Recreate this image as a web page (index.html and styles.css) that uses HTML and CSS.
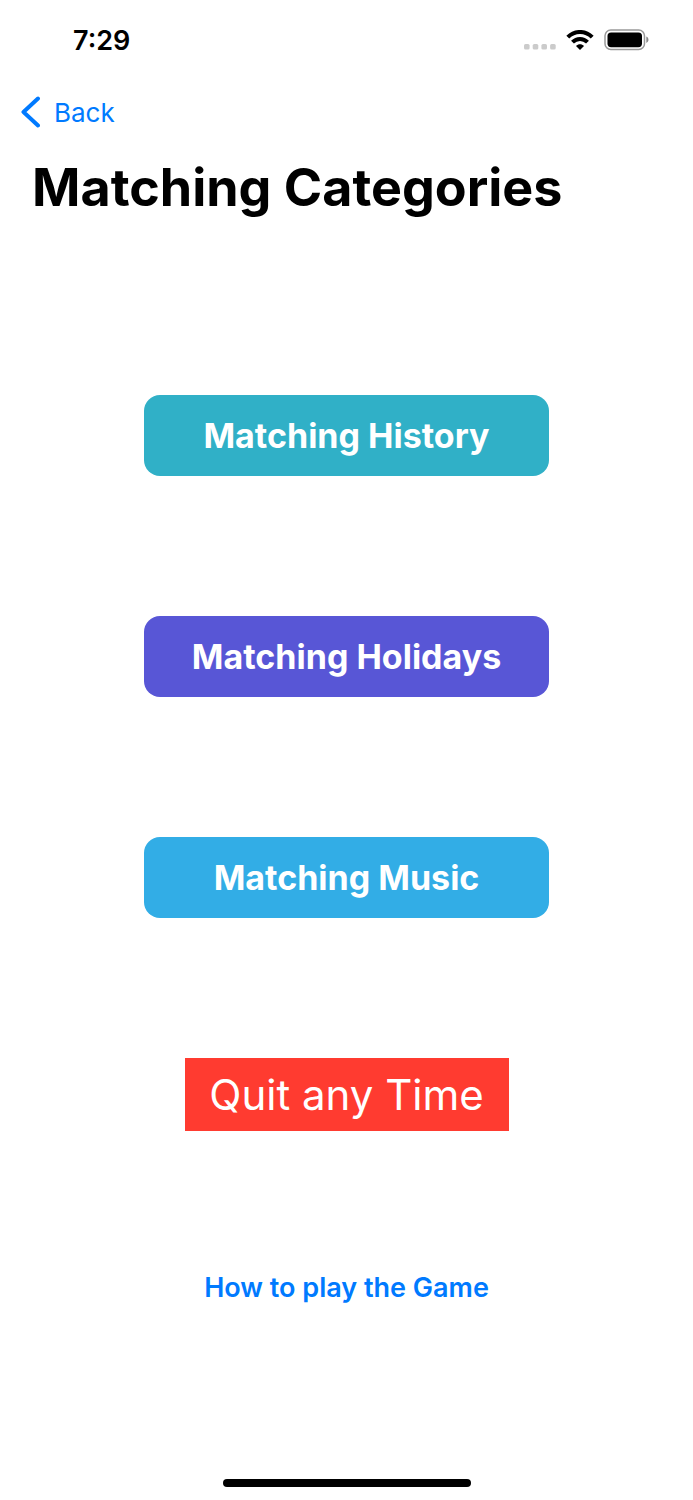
FILE: index.html
```
<!DOCTYPE html>
<html lang="en">
  <head>
    <meta charset="utf-8" />
    <meta name="viewport" content="width=device-width, initial-scale=1.0" />
    <title>Matching Categories</title>
    <link rel="stylesheet" href="styles.css">
  </head>

  <body>
    <div class="status-bar">
      <time class="clock">7:29</time>
      <div class="status-icons">
        <svg class="signal" width="32" height="6" viewBox="0 0 32 6" fill="#cbcbcb" aria-hidden="true">
          <rect x="0" y="0" width="5.6" height="5.6" rx="1.6" />
          <rect x="8.7" y="0" width="5.6" height="5.6" rx="1.6" />
          <rect x="17.4" y="0" width="5.6" height="5.6" rx="1.6" />
          <rect x="26.1" y="0" width="5.6" height="5.6" rx="1.6" />
        </svg>
        <svg width="28" height="20" viewBox="0 0 28 20" fill="none" stroke="#000" stroke-width="4" aria-hidden="true">
          <path d="M1.8 7.2C8.6 .2 19.4 .2 26.2 7.2" />
          <path d="M6.5 12.1C10.7 7.8 17.3 7.8 21.5 12.1" />
          <path d="M14 20l-4-4.100c2.200-2.200 5.800-2.200 8 0z" fill="#000" stroke="none" />
        </svg>
        <svg width="46" height="22" viewBox="0 0 46 22" aria-hidden="true">
          <rect x="1" y="1" width="39.5" height="19.5" rx="5.800" fill="none" stroke="#999" stroke-width="1.5" />
          <rect x="3.5" y="3.4" width="34.5" height="14.8" rx="3.6" />
          <path d="M42.3 7.6c2.900 1.200 2.900 5.200 0 6.400z" fill="#888" />
        </svg>
      </div>
    </div>

    <header>
      <nav>
        <a href="#" class="back">
          <svg width="20" height="32" viewBox="0 0 20 32" fill="none" stroke="#007aff" stroke-width="4" stroke-linecap="round" stroke-linejoin="round" aria-hidden="true">
            <path d="M18 2.500L3.500 16L18 29.500" />
          </svg>
          Back
        </a>
      </nav>
      <h1>Matching Categories</h1>
    </header>

    <main>
      <button class="category history">Matching History</button>
      <button class="category holidays">Matching Holidays</button>
      <button class="category music">Matching Music</button>
      <button class="quit">Quit any Time</button>
      <a href="#" class="help">How to play the Game</a>
    </main>

    <footer>
      <div class="home-indicator"></div>
    </footer>
  </body>
</html>
```
FILE: styles.css
```
* {
  box-sizing: border-box;
}

body {
  display: flex;
  flex-direction: column;
  min-height: 100vh;
  margin: 0;
  font-family: Inter, "Liberation Sans", sans-serif;
  background-color: #fff;
}

.status-bar {
  display: flex;
  justify-content: space-between;
  align-items: center;
  height: 80px;
  padding: 0 43px 0 73px;
}

.clock {
  font-size: 27px;
  font-weight: 600;
}

.status-icons {
  display: flex;
  align-items: center;
  gap: 10px;
}

.signal {
  align-self: flex-end;
  margin-bottom: 1px;
}

nav {
  display: flex;
  align-items: center;
  height: 64px;
  padding-left: 20px;
}

.back {
  display: flex;
  align-items: center;
  gap: 14px;
  color: #007aff;
  font-size: 26px;
  text-decoration: none;
}

h1 {
  margin: 0;
  padding: 12px 32px;
  font-size: 52px;
  font-weight: 700;
  line-height: 64px;
}

main {
  display: flex;
  flex-direction: column;
  align-items: center;
  gap: 140px;
  padding: 163px 144px 0;
}

button {
  border: 0;
  padding: 0;
  color: #fff;
  font-family: inherit;
  white-space: nowrap;
  cursor: pointer;
}

.category {
  width: 100%;
  border-radius: 16px;
  font-size: 34px;
  font-weight: 700;
  line-height: 81px;
}

.history {
  background-color: #30b0c7;
}

.holidays {
  background-color: #5856d6;
}

.music {
  background-color: #32ade6;
}

.quit {
  width: 80%;
  background-color: #ff3b30;
  font-size: 42px;
  font-weight: 400;
  line-height: 73px;
}

.help {
  color: #007aff;
  font-size: 27px;
  font-weight: 600;
  line-height: 34px;
  text-decoration: none;
}

footer {
  display: flex;
  justify-content: center;
  margin-top: auto;
  padding-bottom: 13px;
}

.home-indicator {
  width: 248px;
  height: 8px;
  border-radius: 4px;
  background-color: #000;
}
```
